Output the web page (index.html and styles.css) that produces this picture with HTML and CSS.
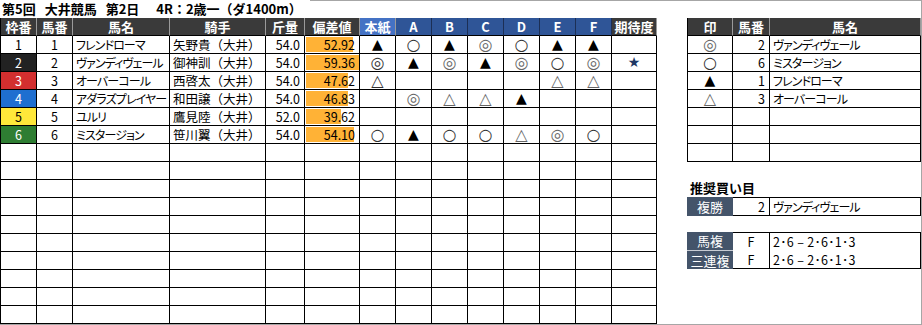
FILE: index.html
```html
<!DOCTYPE html>
<html lang="ja">
<head>
<meta charset="utf-8">
<link rel="stylesheet" href="styles.css">
</head>
<body>
<div class="page">
  <div class="title-row">
    <div class="title"><span>第5回</span><span>大井競馬</span><span>第2日</span><span class="race">4R：2歳一（ダ1400m）</span></div>
    <div class="filler"></div>
  </div>
  <div class="content">
    <div class="main">
      <div class="h">枠番</div><div class="h">馬番</div><div class="h">馬名</div><div class="h">騎手</div><div class="h">斤量</div><div class="h">偏差値</div><div class="h hb1">本紙</div><div class="h hb2">A</div><div class="h hb2">B</div><div class="h hb2">C</div><div class="h hb2">D</div><div class="h hb2">E</div><div class="h hb2">F</div><div class="h">期待度</div>

      <div class="d c w1">1</div><div class="d c">1</div><div class="d l nm">フレンドローマ</div><div class="d l jk">矢野貴（大井）</div><div class="d r">54.0</div><div class="d r bar" style="--w:47px">52.92</div><div class="d m k">▲</div><div class="d m o">○</div><div class="d m k">▲</div><div class="d m o g">◎</div><div class="d m o">○</div><div class="d m k">▲</div><div class="d m k">▲</div><div class="d m"></div>

      <div class="d c w2">2</div><div class="d c">2</div><div class="d l nm">ヴァンディヴェール</div><div class="d l jk">御神訓（大井）</div><div class="d r">54.0</div><div class="d r bar" style="--w:53px">59.36</div><div class="d m o">◎</div><div class="d m k">▲</div><div class="d m o g">◎</div><div class="d m k">▲</div><div class="d m o g">◎</div><div class="d m o">○</div><div class="d m o g">◎</div><div class="d m star">★</div>

      <div class="d c w3">3</div><div class="d c">3</div><div class="d l nm">オーバーコール</div><div class="d l jk">西啓太（大井）</div><div class="d r">54.0</div><div class="d r bar" style="--w:42px">47.62</div><div class="d m o">△</div><div class="d m"></div><div class="d m"></div><div class="d m"></div><div class="d m"></div><div class="d m o g">△</div><div class="d m o g">△</div><div class="d m"></div>

      <div class="d c w4">4</div><div class="d c">4</div><div class="d l nm">アダラズプレイヤー</div><div class="d l jk">和田譲（大井）</div><div class="d r">54.0</div><div class="d r bar" style="--w:42px">46.83</div><div class="d m"></div><div class="d m o g">◎</div><div class="d m o g">△</div><div class="d m o g">△</div><div class="d m k">▲</div><div class="d m"></div><div class="d m"></div><div class="d m"></div>

      <div class="d c w5">5</div><div class="d c">5</div><div class="d l nm">ユルリ</div><div class="d l jk">鷹見陸（大井）</div><div class="d r">52.0</div><div class="d r bar" style="--w:35px">39.62</div><div class="d m"></div><div class="d m"></div><div class="d m"></div><div class="d m"></div><div class="d m"></div><div class="d m"></div><div class="d m"></div><div class="d m"></div>

      <div class="d c w6">6</div><div class="d c">6</div><div class="d l nm">ミスタージョン</div><div class="d l jk">笹川翼（大井）</div><div class="d r">54.0</div><div class="d r bar" style="--w:48px">54.10</div><div class="d m o">○</div><div class="d m k">▲</div><div class="d m o">○</div><div class="d m o">○</div><div class="d m o g">△</div><div class="d m o g">◎</div><div class="d m o">○</div><div class="d m"></div>

      <div class="d"></div><div class="d"></div><div class="d"></div><div class="d"></div><div class="d"></div><div class="d"></div><div class="d"></div><div class="d"></div><div class="d"></div><div class="d"></div><div class="d"></div><div class="d"></div><div class="d"></div><div class="d"></div>
      <div class="d"></div><div class="d"></div><div class="d"></div><div class="d"></div><div class="d"></div><div class="d"></div><div class="d"></div><div class="d"></div><div class="d"></div><div class="d"></div><div class="d"></div><div class="d"></div><div class="d"></div><div class="d"></div>
      <div class="d"></div><div class="d"></div><div class="d"></div><div class="d"></div><div class="d"></div><div class="d"></div><div class="d"></div><div class="d"></div><div class="d"></div><div class="d"></div><div class="d"></div><div class="d"></div><div class="d"></div><div class="d"></div>
      <div class="d"></div><div class="d"></div><div class="d"></div><div class="d"></div><div class="d"></div><div class="d"></div><div class="d"></div><div class="d"></div><div class="d"></div><div class="d"></div><div class="d"></div><div class="d"></div><div class="d"></div><div class="d"></div>
      <div class="d"></div><div class="d"></div><div class="d"></div><div class="d"></div><div class="d"></div><div class="d"></div><div class="d"></div><div class="d"></div><div class="d"></div><div class="d"></div><div class="d"></div><div class="d"></div><div class="d"></div><div class="d"></div>
      <div class="d"></div><div class="d"></div><div class="d"></div><div class="d"></div><div class="d"></div><div class="d"></div><div class="d"></div><div class="d"></div><div class="d"></div><div class="d"></div><div class="d"></div><div class="d"></div><div class="d"></div><div class="d"></div>
      <div class="d"></div><div class="d"></div><div class="d"></div><div class="d"></div><div class="d"></div><div class="d"></div><div class="d"></div><div class="d"></div><div class="d"></div><div class="d"></div><div class="d"></div><div class="d"></div><div class="d"></div><div class="d"></div>
      <div class="d"></div><div class="d"></div><div class="d"></div><div class="d"></div><div class="d"></div><div class="d"></div><div class="d"></div><div class="d"></div><div class="d"></div><div class="d"></div><div class="d"></div><div class="d"></div><div class="d"></div><div class="d"></div>
      <div class="d"></div><div class="d"></div><div class="d"></div><div class="d"></div><div class="d"></div><div class="d"></div><div class="d"></div><div class="d"></div><div class="d"></div><div class="d"></div><div class="d"></div><div class="d"></div><div class="d"></div><div class="d"></div>
      <div class="d"></div><div class="d"></div><div class="d"></div><div class="d"></div><div class="d"></div><div class="d"></div><div class="d"></div><div class="d"></div><div class="d"></div><div class="d"></div><div class="d"></div><div class="d"></div><div class="d"></div><div class="d"></div>
    </div>

    <div class="side">
      <div class="pick">
        <div class="h">印</div><div class="h">馬番</div><div class="h">馬名</div>
        <div class="d m o g">◎</div><div class="d r">2</div><div class="d l nm">ヴァンディヴェール</div>
        <div class="d m o">○</div><div class="d r">6</div><div class="d l nm">ミスタージョン</div>
        <div class="d m k">▲</div><div class="d r">1</div><div class="d l nm">フレンドローマ</div>
        <div class="d m o g">△</div><div class="d r">3</div><div class="d l nm">オーバーコール</div>
        <div class="d"></div><div class="d"></div><div class="d"></div>
        <div class="d"></div><div class="d"></div><div class="d"></div>
        <div class="d"></div><div class="d"></div><div class="d"></div>
      </div>

      <div class="buy-title">推奨買い目</div>
      <div class="buy single">
        <div class="lab">複勝</div><div class="v r">2</div><div class="v l nm last">ヴァンディヴェール</div>
      </div>
      <div class="buy multi">
        <div class="lab first">馬複</div><div class="v c top">F</div><div class="v l last top combo">2･6 – 2･6･1･3</div>
        <div class="lab">三連複</div><div class="v c bot">F</div><div class="v l last bot combo">2･6 – 2･6･1･3</div>
      </div>
    </div>
  </div>
</div>
</body>
</html>
```

FILE: styles.css
```css
* {
  box-sizing: border-box;
  margin: 0;
  padding: 0;
}

body {
  width: 922px;
  height: 325px;
  overflow: hidden;
  background: #fff;
  color: #000;
  font-family: "Noto Sans CJK JP", "Noto Sans", sans-serif;
  font-size: 12.5px;
}

.page {
  width: 922px;
  height: 325px;
  border-right: 1px solid #a6a6a6;
  border-bottom: 1px solid #a6a6a6;
  display: flex;
  flex-direction: column;
}

.title-row {
  height: 18px;
  display: flex;
}

.title {
  display: flex;
  gap: 9px;
  padding-left: 2px;
  font-weight: bold;
  font-size: 13px;
  line-height: 18px;
  white-space: nowrap;
}

.title .race {
  margin-left: 8px;
}

.filler {
  flex: 1;
  border-top: 1px solid #a6a6a6;
  margin-left: 8px;
}

.content {
  display: flex;
  align-items: flex-start;
}

.main {
  display: grid;
  grid-template-columns: 36px 36px 97px 96px 39px 55px repeat(7, 36px) 45px;
  grid-auto-rows: 18px;
  width: 657px;
  border-left: 1px solid #000;
}

.h {
  background: #3a3a3a;
  color: #fff;
  font-weight: bold;
  text-align: center;
  line-height: 17px;
  font-size: 13px;
  border-right: 1px solid #9a9a9a;
  border-bottom: 1px solid #000;
  white-space: nowrap;
}

.h.hb1 {
  background: #4472c4;
}

.h.hb2 {
  background: #2f5597;
  border-right-color: #1c2f55;
}

.d {
  border-right: 1px solid #000;
  border-bottom: 1px solid #000;
  line-height: 17px;
  white-space: nowrap;
  overflow: hidden;
}

.c,
.m {
  text-align: center;
}

.r {
  text-align: right;
  padding-right: 4px;
}

.l {
  text-align: left;
  padding-left: 3px;
}

.nm {
  font-size: 12px;
  font-feature-settings: "palt";
  letter-spacing: -0.9px;
}

.jk {
  padding-left: 3px;
}

.m {
  font-family: "DejaVu Sans", sans-serif;
  font-size: 14px;
  color: #333;
}

.m.o {
  font-size: 16px;
}

.m.k {
  color: #000;
}

.m.g {
  color: #666;
}

.m.star {
  color: #1f3864;
  font-size: 14px;
}

.w1 { background: #fff; }
.w2 { background: #222; color: #fff; }
.w3 { background: #d32f2f; color: #fff; }
.w4 { background: #1f6fd0; color: #fff; }
.w5 { background: #ffe83a; color: #000; }
.w6 { background: #2e7d32; color: #fff; }

.bar {
  background: linear-gradient(#ffb236, #ffb236) no-repeat 1px 1px / var(--w) 15px;
}

.side {
  margin-left: 30px;
  width: 234px;
  display: flex;
  flex-direction: column;
}

.pick {
  display: grid;
  grid-template-columns: 45px 37px 151px;
  grid-auto-rows: 18px;
  border-left: 1px solid #000;
}

.buy-title {
  margin-top: 17px;
  padding-left: 3px;
  font-weight: bold;
  font-size: 13px;
  line-height: 18px;
}

.buy {
  display: grid;
  grid-template-columns: 46px 37px 151px;
}

.single {
  grid-template-rows: 19px;
}

.multi {
  margin-top: 16px;
  grid-template-rows: 19px 18px;
}

.lab {
  background: #44546a;
  color: #fff;
  text-align: center;
  font-size: 13px;
  line-height: 19px;
  white-space: nowrap;
}

.multi .lab.first {
  border-bottom: 1px solid #c8ccd4;
  line-height: 18px;
}

.v {
  border-right: 1px solid #000;
  white-space: nowrap;
  line-height: 17px;
}

.combo {
  letter-spacing: 0.3px;
}

.single .v {
  border-top: 1px solid #000;
  border-bottom: 1px solid #000;
}

.multi .v.top {
  border-top: 1px solid #000;
  line-height: 18px;
}

.multi .v.bot {
  border-bottom: 1px solid #000;
}
```
